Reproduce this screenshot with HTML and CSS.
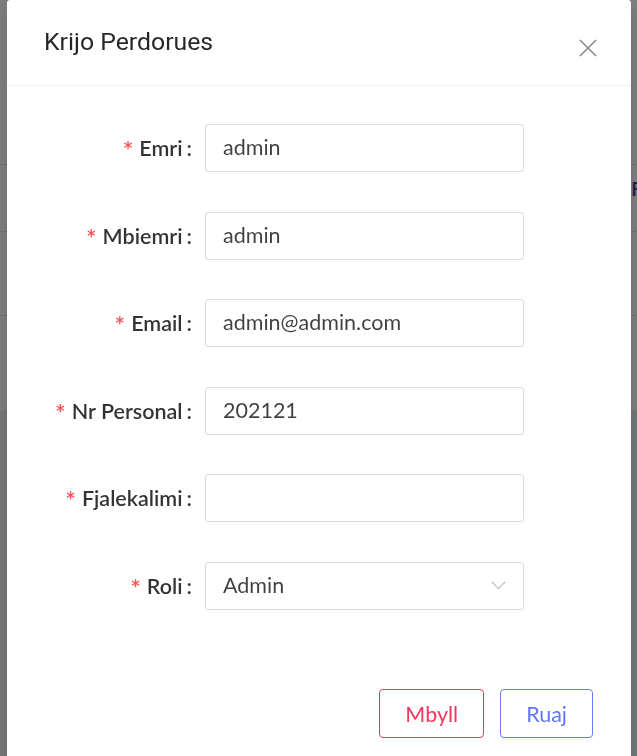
FILE: index.html
```html
<!DOCTYPE html>
<html lang="sq">
<head>
<meta charset="utf-8">
<title>Krijo Perdorues</title>
<link rel="stylesheet" href="styles.css">
</head>
<body>
<div class="page">
  <div class="page-head"></div>
  <div class="page-sub"></div>
  <div class="bg-table">
    <div class="bg-row bg-row-a"></div>
    <div class="bg-row bg-row-b"><span class="bg-cell">F</span></div>
    <div class="bg-row bg-row-c"></div>
    <div class="bg-row bg-row-d"></div>
  </div>
</div>
<div class="mask"></div>
<div class="modal" role="dialog" aria-labelledby="modal-title">
  <div class="modal-header">
    <div class="modal-title" id="modal-title">Krijo Perdorues</div>
  </div>
  <button class="modal-close" type="button" aria-label="Close">
    <svg width="18" height="18" viewBox="0 0 18 18"><path d="M1 1L17 17M17 1L1 17" stroke="#8c8c8c" stroke-width="1.7" fill="none"/></svg>
  </button>
  <div class="modal-body">
    <form class="form">
      <div class="form-row">
        <label class="form-label"><span class="req">*</span>Emri<span class="colon">:</span></label>
        <div class="input">admin</div>
      </div>
      <div class="form-row">
        <label class="form-label"><span class="req">*</span>Mbiemri<span class="colon">:</span></label>
        <div class="input">admin</div>
      </div>
      <div class="form-row">
        <label class="form-label"><span class="req">*</span>Email<span class="colon">:</span></label>
        <div class="input">admin@admin.com</div>
      </div>
      <div class="form-row">
        <label class="form-label"><span class="req">*</span>Nr Personal<span class="colon">:</span></label>
        <div class="input">202121</div>
      </div>
      <div class="form-row">
        <label class="form-label"><span class="req">*</span>Fjalekalimi<span class="colon">:</span></label>
        <div class="input"></div>
      </div>
      <div class="form-row">
        <label class="form-label"><span class="req">*</span>Roli<span class="colon">:</span></label>
        <div class="input select"><span>Admin</span>
          <svg class="chevron" width="15" height="9" viewBox="0 0 15 9"><path d="M0.8 0.8L7.5 7.6L14.2 0.8" stroke="#bfbfbf" stroke-width="1.3" fill="none"/></svg>
        </div>
      </div>
    </form>
  </div>
  <div class="modal-footer">
    <button type="button" class="btn btn-danger">Mbyll</button>
    <button type="button" class="btn btn-primary">Ruaj</button>
  </div>
</div>
</body>
</html>
```

FILE: styles.css
```css
* { box-sizing: border-box; }
html, body {
  margin: 0;
  padding: 0;
  width: 637px;
  height: 756px;
  overflow: hidden;
}
body {
  background: #f0f2f5;
  font-family: Lato, "Noto Sans", sans-serif;
  position: relative;
}
.page {
  width: 637px;
}
.page-head {
  height: 60px;
  width: 320px;
  background: #fff;
  border-bottom: 1px solid #dcdcdc;
}
.page-sub {
  height: 66px;
  width: 320px;
  background: #fff;
  border-bottom: 1px solid #dcdcdc;
}
.bg-table {
  background: #fff;
  margin-top: -126px;
  padding-top: 126px;
}
.bg-row {
  border-bottom: 1px solid #e4e4e4;
  position: relative;
}
.bg-row-a { height: 39px; }
.bg-row-b { height: 67px; }
.bg-row-c { height: 84px; }
.bg-row-d { height: 95px; border-bottom: none; }
.bg-cell {
  position: absolute;
  left: 631px;
  top: 12px;
  font-family: "Open Sans", sans-serif;
  font-weight: 600;
  font-size: 20px;
  line-height: 24px;
  color: #4b3aa0;
}
.mask {
  position: fixed;
  inset: 0;
  background: rgba(0, 0, 0, 0.5);
}
.modal {
  position: absolute;
  left: 7px;
  top: 0;
  width: 624px;
  height: 790px;
  background: #fff;
  border-radius: 3px;
  box-shadow: 0 5px 20px rgba(0, 0, 0, 0.15);
}
.modal-header {
  height: 86px;
  padding: 0 37px;
  border-bottom: 1px solid #f0f0f0;
  display: flex;
  align-items: center;
}
.modal-title {
  font-family: Roboto, "Liberation Sans", sans-serif;
  font-size: 24.8px;
  color: rgba(0, 0, 0, 0.85);
  margin-top: -2px;
}
.modal-close {
  position: absolute;
  left: 572px;
  top: 39px;
  width: 18px;
  height: 18px;
  padding: 0;
  border: none;
  background: none;
  display: block;
}
.modal-close svg { display: block; }
.modal-body {
  padding: 38px 37.5px 0;
}
.form-row {
  display: grid;
  grid-template-columns: 160.5px 319px;
  height: 48px;
  margin-bottom: 39.5px;
}
.form-label {
  display: flex;
  justify-content: flex-end;
  align-items: center;
  font-size: 21.5px;
  font-weight: 600;
  color: rgba(0, 0, 0, 0.8);
  white-space: nowrap;
}
.req {
  color: #ff4d4f;
  font-size: 25px;
  margin-right: 6px;
  position: relative;
  top: 2px;
}
.colon {
  margin: 0 13px 0 4px;
}
.input {
  height: 48px;
  border: 1px solid #d9d9d9;
  border-radius: 3px;
  padding: 0 17px 2px;
  display: flex;
  align-items: center;
  font-size: 21.5px;
  color: rgba(0, 0, 0, 0.75);
}
.select {
  justify-content: space-between;
}
.chevron { display: block; margin-top: 2px; }
.modal-footer {
  padding: 40px 38px 0;
  display: flex;
  justify-content: flex-end;
  gap: 16px;
}
.btn {
  height: 49px;
  padding: 0 25px;
  background: #fff;
  border: 1.5px solid;
  border-radius: 4px;
  font-family: Lato, "Noto Sans", sans-serif;
  font-size: 21.5px;
}
.btn-danger {
  color: #f5365c;
  border-color: #f5365c;
}
.btn-primary {
  color: #6176fb;
  border-color: #6a7dfb;
  box-shadow: 0 2px 0 rgba(0, 0, 0, 0.03);
}
```
